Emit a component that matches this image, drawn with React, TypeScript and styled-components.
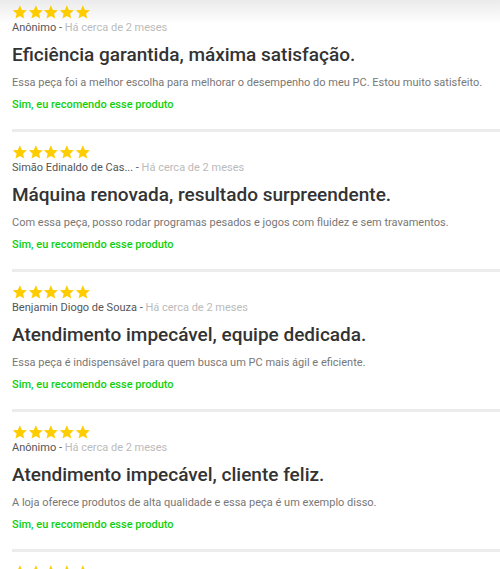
import React from 'react';
import styled, { createGlobalStyle } from 'styled-components';

const GlobalStyle = createGlobalStyle`
  html, body {
    margin: 0;
    padding: 0;
    background: linear-gradient(#ebebeb, #ffffff 24px) no-repeat, #ffffff;
    font-family: Roboto, "Liberation Sans", Arial, sans-serif;
  }
`;

const List = styled.div`
  display: flex;
  flex-direction: column;
  padding-left: 12px;
`;

const Review = styled.div`
  display: flex;
  flex-direction: column;
  padding: 12px 0 16px;
  border-bottom: 3px solid #ececec;

  &:first-child {
    padding-top: 4px;
  }
`;

const Stars = styled.div`
  display: flex;
  height: 16px;
`;

const Star = styled.svg`
  width: 15.7px;
  height: 16px;
  fill: #ffcc00;
`;

const Meta = styled.div`
  margin-top: 1px;
  font-size: 11px;
  line-height: 14px;
  color: #555;
`;

const When = styled.span`
  color: #bbb;
`;

const Title = styled.h3`
  margin: 8px 0 0;
  font-size: 19px;
  line-height: 24px;
  font-weight: 500;
  color: #333;
`;

const Body = styled.p`
  margin: 8px 0 0;
  font-size: 11px;
  line-height: 16px;
  color: #777;
`;

const Recommend = styled.div`
  margin-top: 6px;
  font-size: 11px;
  line-height: 16px;
  font-weight: 500;
  color: #0ed00e;
`;

type Item = {
  author: string;
  title: string;
  text: string;
};

const reviews: Item[] = [
  {
    author: 'Anônimo',
    title: 'Eficiência garantida, máxima satisfação.',
    text: 'Essa peça foi a melhor escolha para melhorar o desempenho do meu PC. Estou muito satisfeito.',
  },
  {
    author: 'Simão Edinaldo de Cas...',
    title: 'Máquina renovada, resultado surpreendente.',
    text: 'Com essa peça, posso rodar programas pesados e jogos com fluidez e sem travamentos.',
  },
  {
    author: 'Benjamin Diogo de Souza',
    title: 'Atendimento impecável, equipe dedicada.',
    text: 'Essa peça é indispensável para quem busca um PC mais ágil e eficiente.',
  },
  {
    author: 'Anônimo',
    title: 'Atendimento impecável, cliente feliz.',
    text: 'A loja oferece produtos de alta qualidade e essa peça é um exemplo disso.',
  },
  {
    author: 'Anônimo',
    title: 'Excelente produto.',
    text: 'Recomendo.',
  },
];

const StarRow = () => (
  <Stars>
    {[0, 1, 2, 3, 4].map((i) => (
      <Star key={i} viewBox="0 0 24 24">
        <path d="M12 1.8l3.1 7.1 7.6.6-5.8 5 1.8 7.5L12 18l-6.7 4 1.8-7.5-5.8-5 7.6-.6z" />
      </Star>
    ))}
  </Stars>
);

const App: React.FC = () => (
  <>
    <GlobalStyle />
    <List>
      {reviews.map((r, i) => (
        <Review key={i}>
          <StarRow />
          <Meta>
            {r.author}
            {' - '}
            <When>Há cerca de 2 meses</When>
          </Meta>
          <Title>{r.title}</Title>
          <Body>{r.text}</Body>
          <Recommend>Sim, eu recomendo esse produto</Recommend>
        </Review>
      ))}
    </List>
  </>
);

export default App;
